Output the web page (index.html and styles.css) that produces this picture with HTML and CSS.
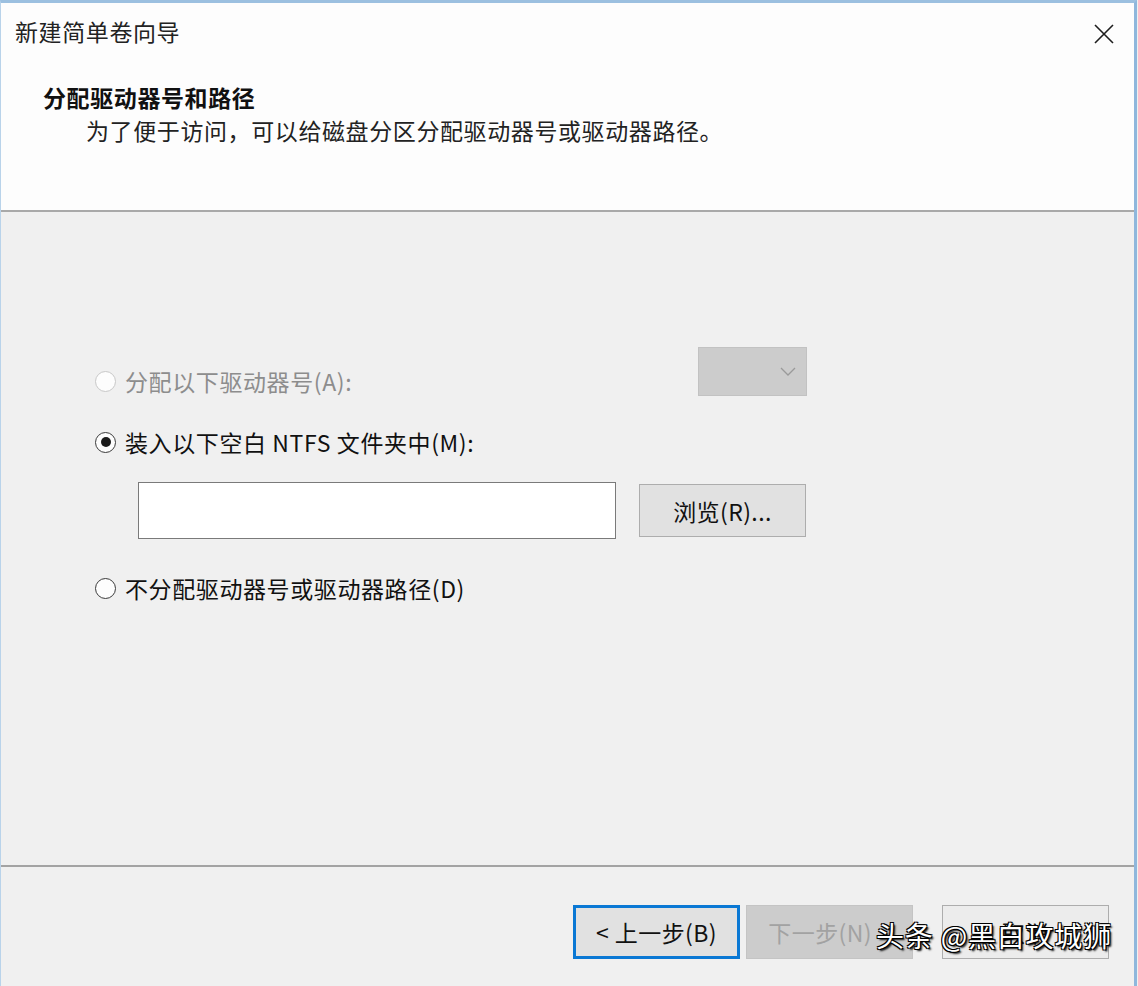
FILE: index.html
```html
<!DOCTYPE html>
<html lang="zh-CN">
<head>
    <meta charset="UTF-8">
    <title>新建简单卷向导</title>
    <link rel="stylesheet" href="styles.css">
</head>
<body>
    <div class="window">
        <div class="header">
            <div class="titlebar">
                <span class="title">新建简单卷向导</span>
                <svg class="close" width="20" height="20" viewBox="0 0 20 20">
                    <path d="M1 1 L19 19 M19 1 L1 19" stroke="#1e1e1e" stroke-width="1.6" fill="none"/>
                </svg>
            </div>
            <div class="heading">分配驱动器号和路径</div>
            <div class="subtitle">为了便于访问，可以给磁盘分区分配驱动器号或驱动器路径。</div>
        </div>

        <div class="content">
            <div class="row-letter">
                <div class="option disabled">
                    <span class="radio"></span>
                    <span>分配以下驱动器号(A):</span>
                </div>
                <div class="dropdown">
                    <svg width="16" height="10" viewBox="0 0 16 10">
                        <path d="M1 1 L8 8 L15 1" stroke="#9a9a9a" stroke-width="1.3" fill="none"/>
                    </svg>
                </div>
            </div>
            <div class="option mount">
                <span class="radio checked"></span>
                <span>装入以下空白 NTFS 文件夹中(M):</span>
            </div>
            <div class="path-row">
                <div class="path-input"></div>
                <div class="btn browse">浏览(R)...</div>
            </div>
            <div class="option none">
                <span class="radio"></span>
                <span>不分配驱动器号或驱动器路径(D)</span>
            </div>
        </div>

        <div class="footer">
            <div class="btn back">&lt; 上一步(B)</div>
            <div class="btn next">下一步(N) &gt;</div>
            <div class="btn cancel">取消</div>
            <div class="watermark">头条 @黑白攻城狮</div>
        </div>
    </div>
</body>
</html>
```

FILE: styles.css
```css
body {
    margin: 0;
    background: #f0f0f0;
    font-family: "Noto Sans CJK SC", "Liberation Sans", sans-serif;
    color: #1a1a1a;
}
.window {
    position: relative;
    width: 1133px;
    height: 983px;
    border-top: 3px solid #9cc0e0;
    border-left: 1px solid #b9d3ea;
    border-right: 3px solid #8fb7dc;
    background: #f0f0f0;
    overflow: hidden;
}
.header {
    height: 207px;
    background: #fdfdfd;
    border-bottom: 2px solid #a9a9a9;
    font-size: 23px;
    letter-spacing: 0.6px;
}
.titlebar {
    display: flex;
    justify-content: space-between;
    align-items: center;
    padding: 14px 20px 0 14px;
    height: 28px;
}
.title {
    line-height: 28px;
    color: #222;
}
.close {
    margin-top: 6px;
}
.heading {
    margin-top: 39px;
    padding-left: 42px;
    line-height: 26px;
    font-weight: bold;
    color: #111;
}
.subtitle {
    margin-top: 7px;
    padding-left: 85px;
    line-height: 26px;
    color: #222;
}
.content {
    height: 655px;
    padding-left: 94px;
    box-sizing: border-box;
    padding-top: 135px;
    border-bottom: 2px solid #a3a3a3;
}
.row-letter {
    display: flex;
    align-items: flex-start;
}
.option {
    display: flex;
    align-items: center;
    gap: 9px;
    font-size: 23px;
    letter-spacing: 0.6px;
    line-height: 26px;
    color: #111;
}
.row-letter .option {
    width: 603px;
    margin-top: 21px;
}
.option.disabled {
    color: #8d8d8d;
}
.radio {
    width: 19px;
    height: 19px;
    border: 1.5px solid #3a3a3a;
    border-radius: 50%;
    background: #fdfdfd;
    position: relative;
    flex-shrink: 0;
}
.disabled .radio {
    border-color: #c8c8c8;
}
.radio.checked::after {
    content: "";
    position: absolute;
    left: 4.5px;
    top: 4.5px;
    width: 10px;
    height: 10px;
    border-radius: 50%;
    background: #1a1a1a;
}
.dropdown {
    width: 109px;
    height: 49px;
    background: #cccccc;
    border: 1px solid #c2c2c2;
    display: flex;
    justify-content: flex-end;
    align-items: center;
    padding-right: 10px;
    box-sizing: border-box;
}
.mount {
    margin-top: 33px;
}
.path-row {
    display: flex;
    align-items: center;
    gap: 23px;
    margin-top: 27px;
    margin-left: 43px;
}
.path-input {
    width: 478px;
    height: 57px;
    box-sizing: border-box;
    border: 1px solid #7a7a7a;
    background: #fff;
}
.btn {
    display: flex;
    align-items: center;
    justify-content: center;
    box-sizing: border-box;
    width: 167px;
    height: 54px;
    font-size: 23px;
    letter-spacing: 0.4px;
    background: #e1e1e1;
    border: 1px solid #adadad;
    color: #111;
}
.browse {
    height: 53px;
}
.none {
    margin-top: 36px;
}
.footer {
    display: flex;
    align-items: flex-start;
    padding-top: 38px;
    padding-left: 572px;
}
.back {
    border: 3px solid #0a78d4;
}
.next {
    margin-left: 6px;
    background: #cccccc;
    border-color: #c4c4c4;
    color: #a2a2a2;
}
.cancel {
    margin-left: 29px;
    background: #ececec;
}
.watermark {
    position: absolute;
    left: 875px;
    top: 912px;
    font-size: 28px;
    letter-spacing: 0.8px;
    line-height: 40px;
    color: #fff;
    text-shadow: 1px 1px 0 #000, -1px -1px 0 #000, 1px -1px 0 #000, -1px 1px 0 #000, 2px 2px 2px #000;
}
```
